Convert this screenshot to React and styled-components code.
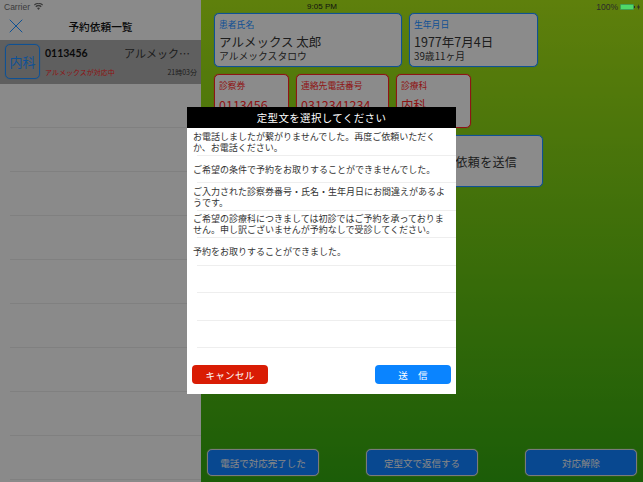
import React from "react";
import styled, { createGlobalStyle } from "styled-components";
import { X } from "lucide-react";

const JP = `"Noto Sans CJK JP", "Noto Sans", sans-serif`;
const BLUE = "#1a8cff";
const RED = "#f52525";

const GlobalStyle = createGlobalStyle`
  html, body { margin: 0; padding: 0; width: 643px; height: 482px; overflow: hidden; background: #000; }
  * { box-sizing: border-box; }
  #root { width: 643px; height: 482px; }
`;

const Screen = styled.div`
  position: relative;
  display: flex;
  width: 643px;
  height: 482px;
  overflow: hidden;
  font-family: ${JP};
`;

// ios status bar, sits above the dim layer
const StatusBar = styled.div`
  position: absolute;
  left: 0;
  right: 0;
  top: 0;
  z-index: 3;
  display: grid;
  grid-template-columns: 1fr auto 1fr;
  align-items: center;
  height: 13px;
  padding: 0 3px 0 4px;
  font-family: "Liberation Sans", sans-serif;
  font-size: 8.5px;
  color: #2b2b2b;
`;

const StatusLeft = styled.div`
  display: flex;
  align-items: center;
  gap: 4px;
  color: #3a3a3a;
`;

const Clock = styled.div`
  font-size: 8px;
  color: #111;
`;

const StatusRight = styled.div`
  display: flex;
  align-items: center;
  justify-content: flex-end;
  gap: 2px;
`;

const Battery = styled.span`
  display: block;
  width: 14px;
  height: 6px;
  background: #4fd96a;
  border: 1px solid #3f9e52;
  border-radius: 1px;
`;

const BatteryTip = styled.span`
  display: block;
  width: 1px;
  height: 2px;
  margin-left: -2px;
  background: #2b2b2b;
`;

// left list
const Sidebar = styled.aside`
  display: flex;
  flex-direction: column;
  width: 201px;
  flex-shrink: 0;
  padding-top: 13px;
  background: #eeeeee;
`;

const NavBar = styled.div`
  position: relative;
  display: flex;
  align-items: center;
  justify-content: center;
  height: 27px;
  font-size: 10.7px;
  font-weight: 500;
  color: #111;
`;

const CloseButton = styled.span`
  position: absolute;
  left: 4px;
  top: 1px;
  display: flex;
  color: ${BLUE};
`;

const SelectedRow = styled.div`
  display: flex;
  height: 44px;
  padding: 4px 4px 0 5px;
  gap: 5px;
  background: #a4a4a4;
`;

const DeptBadge = styled.div`
  display: flex;
  align-items: center;
  justify-content: center;
  width: 35px;
  height: 35px;
  border: 1px solid ${BLUE};
  box-shadow: 0 0 1px ${BLUE};
  border-radius: 5px;
  font-size: 13px;
  color: ${BLUE};
`;

const RowBody = styled.div`
  flex: 1;
  display: flex;
  flex-direction: column;
  min-width: 0;
`;

const RowLine = styled.div`
  display: flex;
  align-items: center;
  justify-content: space-between;
  height: ${(p) => p.$h}px;
`;

const Ticket = styled.span`
  font-family: "Lato", sans-serif;
  font-size: 10.5px;
  font-weight: 700;
  color: #111;
`;

const RowName = styled.span`
  padding-right: 7px;
  font-size: 11px;
  color: #333;
`;

const RowStatus = styled.span`
  font-size: 7px;
  color: #f02020;
`;

const RowTime = styled.span`
  font-size: 7px;
  color: #333;
`;

const EmptyRow = styled.div`
  height: 44px;
  flex-shrink: 0;
  margin-left: 10px;
  border-bottom: 1px solid #dcdcdc;
`;

// right detail pane
const Main = styled.main`
  flex: 1;
  display: flex;
  flex-direction: column;
  background: linear-gradient(#a3dc15, #30a00e);
  padding: 13px 6px 6px 13px;
`;

const CardRow = styled.div`
  display: flex;
  gap: 7px;
  margin-bottom: 7px;
`;

const Card = styled.div`
  display: flex;
  flex-direction: column;
  width: ${(p) => p.$w}px;
  height: 54px;
  padding: 4px 4px;
  background: #f0f0f0;
  border: 1px solid ${(p) => (p.$red ? RED : BLUE)};
  box-shadow: 0 0 1px ${(p) => (p.$red ? RED : BLUE)};
  border-radius: 5px;
  color: ${(p) => (p.$red ? RED : "#333")};
`;

const CardLabel = styled.div`
  height: 15px;
  font-size: 8.8px;
  line-height: 13px;
  color: ${(p) => (p.$red ? RED : BLUE)};
`;

const CardValue = styled.div`
  font-size: 12.5px;
  line-height: 17px;
  margin-top: 2px;
`;

const CardSub = styled.div`
  font-size: 9.8px;
  line-height: 12px;
`;

const SendWrap = styled.div`
  display: flex;
  padding-left: 188px;
`;

const SendCard = styled.div`
  display: flex;
  align-items: center;
  justify-content: center;
  width: 141px;
  height: 52px;
  padding-left: 3px;
  background: #f0f0f0;
  border: 1px solid ${BLUE};
  box-shadow: 0 0 1px ${BLUE};
  border-radius: 5px;
  font-size: 12px;
  letter-spacing: 0.3px;
  color: #333;
`;

const ActionBar = styled.div`
  display: flex;
  justify-content: space-between;
  margin-top: auto;
  margin-left: -7px;
`;

const ActionButton = styled.button`
  width: 112px;
  height: 27px;
  padding: 0;
  background: #0f7cf8;
  border: 1px solid #d2d2d2;
  box-shadow: 0 0 1px #d2d2d2;
  border-radius: 5px;
  font-family: ${JP};
  font-size: 9.5px;
  color: #e8e8e8;
`;

// dimming layer and dialog
const Dim = styled.div`
  position: absolute;
  inset: 0;
  z-index: 1;
  background: rgba(0, 0, 0, 0.42);
`;

const Dialog = styled.div`
  position: absolute;
  left: 187px;
  top: 107px;
  z-index: 2;
  display: flex;
  flex-direction: column;
  width: 269px;
  height: 287px;
  background: #fff;
`;

const DialogTitle = styled.div`
  display: flex;
  align-items: center;
  justify-content: center;
  height: 21px;
  flex-shrink: 0;
  background: #000;
  font-size: 10.5px;
  letter-spacing: 0.35px;
  color: #fff;
`;

const MessageList = styled.div`
  display: flex;
  flex-direction: column;
`;

const MessageRow = styled.div`
  position: relative;
  display: flex;
  align-items: center;
  height: 27.5px;
  padding: 0 6px;
  font-size: 9px;
  line-height: 11px;
  color: #333;

  &::after {
    content: "";
    position: absolute;
    left: 10px;
    right: 0;
    bottom: 0;
    height: 1px;
    background: #eeeeee;
  }
`;

const DialogFooter = styled.div`
  display: flex;
  justify-content: space-between;
  padding: 17px 5px 0;
`;

const DialogButton = styled.button`
  width: 76px;
  height: 19px;
  padding: 0;
  border: none;
  border-radius: 4px;
  background: ${(p) => (p.$red ? "#d91c04" : "#0a84ff")};
  font-family: ${JP};
  font-size: 9.5px;
  letter-spacing: 0.3px;
  color: #fff;
  white-space: pre;
`;

const messages = [
  "お電話しましたが繋がりませんでした。再度ご依頼いただくか、お電話ください。",
  "ご希望の条件で予約をお取りすることができませんでした。",
  "ご入力された診察券番号・氏名・生年月日にお間違えがあるようです。",
  "ご希望の診療科につきましては初診ではご予約を承っておりません。申し訳ございませんが予約なしで受診してください。",
  "予約をお取りすることができました。",
  "",
  "",
  "",
];

const WifiIcon = () => (
  <svg width="9" height="7" viewBox="0 0 12 9" fill="#3a3a3a">
    <path d="M6 9 4 6.6a3 3 0 0 1 4 0zM3 5.5 1.8 4.1a6.4 6.4 0 0 1 8.4 0L9 5.500a4.600 4.600 0 0 0-6 0zM.9 3 0 1.900a9 9 0 0 1 12 0L11.100 3a7.700 7.700 0 0 0-10.200 0z" />
  </svg>
);

const BoltIcon = () => (
  <svg width="3" height="6" viewBox="0 0 3 6" fill="#2b2b2b">
    <path d="M1.800 0 0 3.400h1.200L1 6l2-3.600H1.700z" />
  </svg>
);

export default function App() {
  return (
    <Screen>
      <GlobalStyle />
      <Sidebar>
        <NavBar>
          <CloseButton>
            <X size={24} strokeWidth={1} />
          </CloseButton>
          予約依頼一覧
        </NavBar>
        <SelectedRow>
          <DeptBadge>内科</DeptBadge>
          <RowBody>
            <RowLine $h={17}>
              <Ticket>0113456</Ticket>
              <RowName>アルメック…</RowName>
            </RowLine>
            <RowLine $h={22}>
              <RowStatus>アルメックスが対応中</RowStatus>
              <RowTime>21時03分</RowTime>
            </RowLine>
          </RowBody>
        </SelectedRow>
        {Array.from({ length: 9 }).map((_, i) => (
          <EmptyRow key={i} />
        ))}
      </Sidebar>
      <Main>
        <CardRow>
          <Card $w={188}>
            <CardLabel>患者氏名</CardLabel>
            <CardValue>アルメックス 太郎</CardValue>
            <CardSub>アルメックスタロウ</CardSub>
          </Card>
          <Card $w={129}>
            <CardLabel>生年月日</CardLabel>
            <CardValue>1977年7月4日</CardValue>
            <CardSub>39歳11ヶ月</CardSub>
          </Card>
        </CardRow>
        <CardRow>
          <Card $w={75} $red>
            <CardLabel $red>診察券</CardLabel>
            <CardValue>0113456</CardValue>
          </Card>
          <Card $w={93} $red>
            <CardLabel $red>連絡先電話番号</CardLabel>
            <CardValue>0312341234</CardValue>
          </Card>
          <Card $w={75} $red>
            <CardLabel $red>診療科</CardLabel>
            <CardValue>内科</CardValue>
          </Card>
        </CardRow>
        <SendWrap>
          <SendCard>予約依頼を送信</SendCard>
        </SendWrap>
        <ActionBar>
          <ActionButton>電話で対応完了した</ActionButton>
          <ActionButton>定型文で返信する</ActionButton>
          <ActionButton>対応解除</ActionButton>
        </ActionBar>
      </Main>
      <Dim />
      <StatusBar>
        <StatusLeft>
          Carrier <WifiIcon />
        </StatusLeft>
        <Clock>9:05 PM</Clock>
        <StatusRight>
          100% <Battery />
          <BatteryTip />
          <BoltIcon />
        </StatusRight>
      </StatusBar>
      <Dialog>
        <DialogTitle>定型文を選択してください</DialogTitle>
        <MessageList>
          {messages.map((m, i) => (
            <MessageRow key={i}>{m}</MessageRow>
          ))}
        </MessageList>
        <DialogFooter>
          <DialogButton $red>キャンセル</DialogButton>
          <DialogButton>{"送　信"}</DialogButton>
        </DialogFooter>
      </Dialog>
    </Screen>
  );
}
